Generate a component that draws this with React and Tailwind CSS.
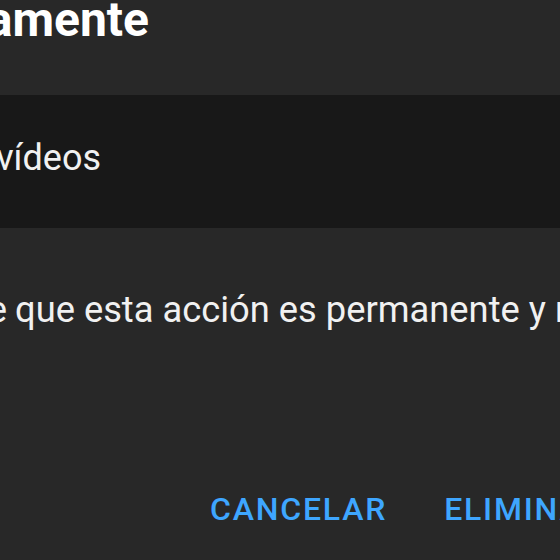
export default function App() {
  return (
    <div
      className="w-[560px] h-[560px] overflow-hidden bg-[#282828] text-[#f1f1f1]"
      style={{ fontFamily: "Roboto, 'Liberation Sans', sans-serif" }}
    >
      <div className="flex justify-end w-[149px] whitespace-nowrap h-[95px]">
        <h2 className="text-[48px] leading-[40px] font-bold text-white">Eliminar definitivamente</h2>
      </div>

      <div className="h-[133px] bg-[#181818] pt-[41px]">
        <div className="flex justify-end w-[101px] whitespace-nowrap">
          <span className="text-[36px] leading-[44px]">3 vídeos</span>
        </div>
      </div>

      <div className="flex whitespace-nowrap text-[36.3px] leading-[44px] pt-[60px]">
        <div className="flex justify-end w-[7px] shrink-0">
          <span>Soy consciente de</span>
        </div>
        <span className="pl-[8px]">que esta acción es permanente y no se puede deshacer</span>
      </div>

      <div className="flex gap-[57px] pl-[210px] pt-[157px] whitespace-nowrap">
        <button className="text-[32px] leading-[40px] font-medium tracking-[1.8px] text-[#3ea6ff]">CANCELAR</button>
        <button className="text-[32px] leading-[40px] font-medium tracking-[1.8px] text-[#3ea6ff]">ELIMINAR</button>
      </div>
    </div>
  );
}
